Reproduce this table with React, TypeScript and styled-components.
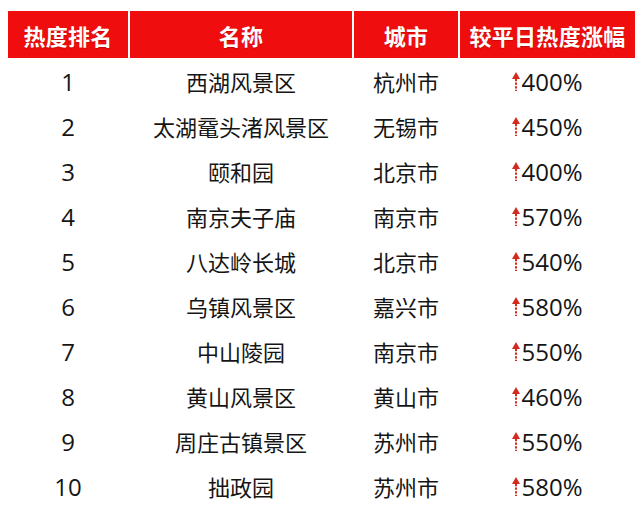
import styled, { createGlobalStyle } from "styled-components";

const GlobalStyle = createGlobalStyle`
  html, body {
    margin: 0;
    padding: 0;
    background: #ffffff;
  }
  body {
    font-family: "Noto Sans CJK SC", "Noto Sans", sans-serif;
  }
`;

const COLUMNS = "120px 222px 104px 175px";

const Page = styled.div`
  width: 640px;
  height: 511px;
  padding: 11px 0 0 8px;
  box-sizing: border-box;
  overflow: hidden;
`;

const HeaderRow = styled.div`
  display: grid;
  grid-template-columns: ${COLUMNS};
  column-gap: 2px;
  height: 47px;
`;

const HeaderCell = styled.div`
  display: flex;
  align-items: center;
  justify-content: center;
  background: #f00d0d;
  color: #ffffff;
  font-size: 22px;
  font-weight: 700;
  letter-spacing: 0.3px;
  text-shadow: 0 1px 1px rgba(120, 0, 0, 0.35);
  white-space: nowrap;
`;

const Row = styled.div`
  display: grid;
  grid-template-columns: ${COLUMNS};
  column-gap: 2px;
  height: 45px;
`;

const Cell = styled.div<{ $numeric?: boolean }>`
  display: flex;
  align-items: center;
  justify-content: center;
  color: #151515;
  font-family: ${({ $numeric }) =>
    $numeric
      ? `"Open Sans", "Noto Sans CJK SC", sans-serif`
      : `"Noto Sans CJK SC", "Noto Sans", sans-serif`};
  font-size: ${({ $numeric }) => ($numeric ? "24px" : "22px")};
  font-weight: 400;
  white-space: nowrap;
  padding-top: 1px;
`;

const Rise = styled.span`
  display: inline-flex;
  align-items: center;
`;

const ArrowIcon = styled.svg`
  width: 8px;
  height: 19px;
  margin-right: 1px;
  margin-top: 1px;
`;

const UpArrow = () => (
  <ArrowIcon viewBox="0 0 8 19">
    <polygon points="4,0 8,7 0,7" fill="#d42a1e" />
    <line
      x1="4"
      y1="7"
      x2="4"
      y2="19"
      stroke="#d42a1e"
      strokeWidth="2"
      strokeDasharray="2.2 1.4"
    />
  </ArrowIcon>
);

type Spot = {
  rank: number;
  name: string;
  city: string;
  rise: string;
};

const SPOTS: Spot[] = [
  { rank: 1, name: "西湖风景区", city: "杭州市", rise: "400%" },
  { rank: 2, name: "太湖鼋头渚风景区", city: "无锡市", rise: "450%" },
  { rank: 3, name: "颐和园", city: "北京市", rise: "400%" },
  { rank: 4, name: "南京夫子庙", city: "南京市", rise: "570%" },
  { rank: 5, name: "八达岭长城", city: "北京市", rise: "540%" },
  { rank: 6, name: "乌镇风景区", city: "嘉兴市", rise: "580%" },
  { rank: 7, name: "中山陵园", city: "南京市", rise: "550%" },
  { rank: 8, name: "黄山风景区", city: "黄山市", rise: "460%" },
  { rank: 9, name: "周庄古镇景区", city: "苏州市", rise: "550%" },
  { rank: 10, name: "拙政园", city: "苏州市", rise: "580%" },
];

const HEADERS = ["热度排名", "名称", "城市", "较平日热度涨幅"];

export default function App() {
  return (
    <>
      <GlobalStyle />
      <Page>
        <HeaderRow>
          {HEADERS.map((title) => (
            <HeaderCell key={title}>{title}</HeaderCell>
          ))}
        </HeaderRow>
        {SPOTS.map((spot) => (
          <Row key={spot.rank}>
            <Cell $numeric>{spot.rank}</Cell>
            <Cell>{spot.name}</Cell>
            <Cell>{spot.city}</Cell>
            <Cell $numeric>
              <Rise>
                <UpArrow />
                {spot.rise}
              </Rise>
            </Cell>
          </Row>
        ))}
      </Page>
    </>
  );
}
